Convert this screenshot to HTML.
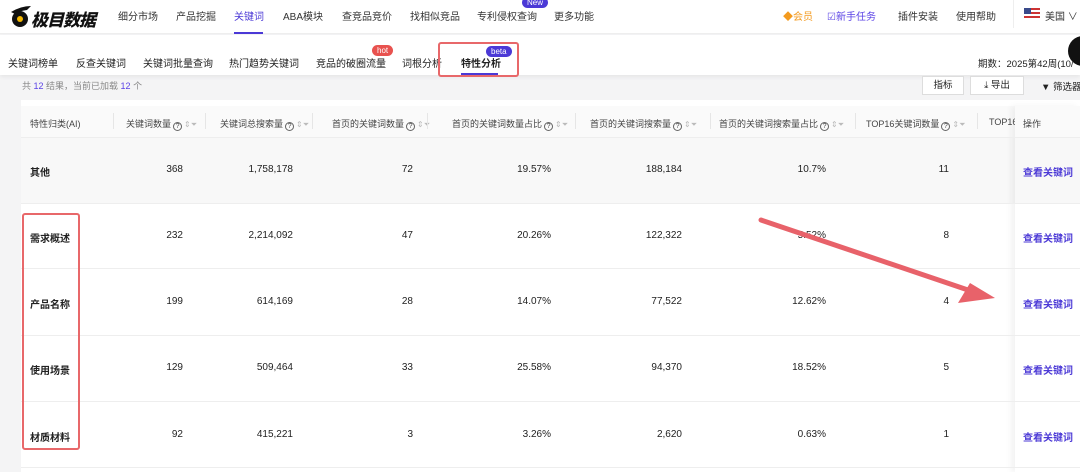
<!DOCTYPE html><html><head><meta charset="utf-8"><style>
*{margin:0;padding:0;box-sizing:border-box}
body{width:1080px;height:472px;overflow:hidden;background:#f4f4f5;font-family:"Liberation Sans","Noto Sans CJK SC",sans-serif;color:#222;position:relative}
.a{position:absolute;white-space:nowrap}
.top{position:absolute;left:0;top:0;width:1080px;height:34px;background:#fff;border-bottom:1px solid #eee}
.sub{position:absolute;left:0;top:35px;width:1080px;height:40px;background:#fff;box-shadow:0 2px 4px rgba(0,0,0,.06)}
.n{font-size:10px;color:#333;top:8px}
.s{font-size:10px;color:#222;top:55px}
.tbl{position:absolute;left:21px;top:100px;width:1059px;height:372px;background:#fff}
.h{font-size:9px;color:#444;top:117px}
.v{font-size:10px;color:#222;text-align:right;width:100px}
.l{font-size:10px;font-weight:bold;color:#222}
.q{display:inline-block;width:9px;height:9px;border:1px solid #666;border-radius:50%;font-size:7px;line-height:7px;text-align:center;vertical-align:-1px;margin-left:2px}
.so{color:#bbb;font-size:8px;margin-left:2px}
.sep{position:absolute;top:113px;width:1px;height:16px;background:#e6e6e6}
.row{position:absolute;left:21px;width:1059px;height:1px;background:#eee}
.lk{font-size:10px;color:#4b39d6;font-weight:bold;left:1023px}
.badge{position:absolute;color:#fff;font-size:8px;border-radius:7px;padding:0 5px;height:11px;line-height:11px}
</style></head><body>
<div class="top"></div>
<svg class="a" style="left:7px;top:4px" width="28" height="24"><path d="M4 8 Q14 2 24 2 L20 6 Q12 7 8 10 Z" fill="#111"/><circle cx="13" cy="15" r="8" fill="#111"/><circle cx="13" cy="15" r="3" fill="#f5b800"/></svg>
<div class="a" style="left:31px;top:6px;font-size:17px;font-weight:900;font-style:italic;color:#111;letter-spacing:-1px">极目数据</div>
<div class="a n" style="left:118px">细分市场</div>
<div class="a n" style="left:176px">产品挖掘</div>
<div class="a n" style="left:234px;color:#4b39d6">关键词</div>
<div class="a" style="left:234px;top:32px;width:29px;height:2px;background:#4b39d6"></div>
<div class="a n" style="left:283px">ABA模块</div>
<div class="a n" style="left:342px">查竞品竞价</div>
<div class="a n" style="left:410px">找相似竞品</div>
<div class="a n" style="left:477px">专利侵权查询</div>
<div class="badge" style="left:522px;top:-3px;background:#4b39d6">New</div>
<div class="a n" style="left:554px">更多功能</div>
<div class="a n" style="left:783px;color:#f39a1e">◆会员</div>
<div class="a n" style="left:827px;color:#5b43e6">☑新手任务</div>
<div class="a n" style="left:898px">插件安装</div>
<div class="a n" style="left:956px">使用帮助</div>
<div class="a" style="left:1013px;top:0;width:1px;height:28px;background:#eee"></div>
<div class="a" style="left:1024px;top:8px;width:16px;height:12px;background:repeating-linear-gradient(#c33 0 2px,#fff 2px 4px)"><div style="width:7px;height:6px;background:#3a4a8a"></div></div>
<div class="a n" style="left:1045px">美国 ∨</div>
<div class="sub"></div>
<div class="a s" style="left:8px">关键词榜单</div>
<div class="a s" style="left:76px">反查关键词</div>
<div class="a s" style="left:143px">关键词批量查询</div>
<div class="a s" style="left:229px">热门趋势关键词</div>
<div class="a s" style="left:316px">竞品的破圈流量</div>
<div class="badge" style="left:372px;top:45px;background:#e8524f">hot</div>
<div class="a s" style="left:402px">词根分析</div>
<div class="a s" style="left:461px;font-weight:bold">特性分析</div>
<div class="badge" style="left:486px;top:46px;background:#4b39d6">beta</div>
<div class="a" style="left:461px;top:73px;width:37px;height:2px;background:#4b39d6"></div>
<div class="a" style="left:438px;top:42px;width:81px;height:35px;border:2px solid #e8686a;border-radius:3px"></div>
<div class="a s" style="left:978px;top:56px;font-size:9.5px">期数：2025第42周(10/</div>
<div class="a" style="left:1068px;top:36px;width:30px;height:30px;border-radius:50%;background:#111"></div>
<div class="tbl"></div>
<div class="a" style="left:22px;top:79px;font-size:9px;color:#888">共 <span style="color:#5b43e6">12</span> 结果，当前已加载 <span style="color:#5b43e6">12</span> 个</div>
<div class="a" style="left:922px;top:76px;width:42px;height:19px;border:1px solid #ddd;font-size:9.5px;text-align:center;line-height:17px;background:#fff">指标</div>
<div class="a" style="left:970px;top:76px;width:54px;height:19px;border:1px solid #ddd;font-size:9.5px;text-align:center;line-height:17px;background:#fff">⤓ 导出</div>
<div class="a" style="left:1041px;top:79px;font-size:9.5px">▼ 筛选器</div>
<div class="a" style="left:21px;top:106px;width:1059px;height:31px;background:#fafafa"></div>
<div class="a" style="left:21px;top:137px;width:1059px;height:66px;background:#f8f8f8"></div>
<div class="a" style="left:1015px;top:106px;width:65px;height:366px;box-shadow:-4px 0 6px rgba(0,0,0,.05)"></div>
<div class="a h" style="left:30px">特性归类(AI)</div>
<div class="sep" style="left:113px"></div><div class="a h" style="left:126px">关键词数量<span class="q">?</span><span class="so">⇕⏷</span></div>
<div class="sep" style="left:205px"></div><div class="a h" style="left:220px">关键词总搜索量<span class="q">?</span><span class="so">⇕⏷</span></div>
<div class="sep" style="left:312px"></div><div class="a h" style="left:332px">首页的关键词数量<span class="q">?</span><span class="so">⇕⏷</span></div>
<div class="sep" style="left:427px"></div><div class="a h" style="left:452px">首页的关键词数量占比<span class="q">?</span><span class="so">⇕⏷</span></div>
<div class="sep" style="left:575px"></div><div class="a h" style="left:590px">首页的关键词搜索量<span class="q">?</span><span class="so">⇕⏷</span></div>
<div class="sep" style="left:710px"></div><div class="a h" style="left:719px">首页的关键词搜索量占比<span class="q">?</span><span class="so">⇕⏷</span></div>
<div class="sep" style="left:855px"></div><div class="a h" style="left:866px">TOP16关键词数量<span class="q">?</span><span class="so">⇕⏷</span></div>
<div class="sep" style="left:977px"></div><div class="a h" style="left:989px">TOP16</div>
<div class="a h" style="left:1015px;padding-left:8px;background:#fafafa;width:65px">操作</div>
<div class="row" style="top:137px"></div><div class="row" style="top:203px"></div><div class="row" style="top:268px"></div><div class="row" style="top:335px"></div><div class="row" style="top:401px"></div><div class="row" style="top:467px"></div>

<div class="a l" style="left:30px;top:164px">其他</div><div class="a v" style="left:83px;top:164px">368</div><div class="a v" style="left:193px;top:164px">1,758,178</div><div class="a v" style="left:313px;top:164px">72</div><div class="a v" style="left:451px;top:164px">19.57%</div><div class="a v" style="left:582px;top:164px">188,184</div><div class="a v" style="left:726px;top:164px">10.7%</div><div class="a v" style="left:849px;top:164px">11</div><div class="a lk" style="top:164px">查看关键词</div>
<div class="a l" style="left:30px;top:230px">需求概述</div><div class="a v" style="left:83px;top:230px">232</div><div class="a v" style="left:193px;top:230px">2,214,092</div><div class="a v" style="left:313px;top:230px">47</div><div class="a v" style="left:451px;top:230px">20.26%</div><div class="a v" style="left:582px;top:230px">122,322</div><div class="a v" style="left:726px;top:230px">5.52%</div><div class="a v" style="left:849px;top:230px">8</div><div class="a lk" style="top:230px">查看关键词</div>
<div class="a l" style="left:30px;top:296px">产品名称</div><div class="a v" style="left:83px;top:296px">199</div><div class="a v" style="left:193px;top:296px">614,169</div><div class="a v" style="left:313px;top:296px">28</div><div class="a v" style="left:451px;top:296px">14.07%</div><div class="a v" style="left:582px;top:296px">77,522</div><div class="a v" style="left:726px;top:296px">12.62%</div><div class="a v" style="left:849px;top:296px">4</div><div class="a lk" style="top:296px">查看关键词</div>
<div class="a l" style="left:30px;top:362px">使用场景</div><div class="a v" style="left:83px;top:362px">129</div><div class="a v" style="left:193px;top:362px">509,464</div><div class="a v" style="left:313px;top:362px">33</div><div class="a v" style="left:451px;top:362px">25.58%</div><div class="a v" style="left:582px;top:362px">94,370</div><div class="a v" style="left:726px;top:362px">18.52%</div><div class="a v" style="left:849px;top:362px">5</div><div class="a lk" style="top:362px">查看关键词</div>
<div class="a l" style="left:30px;top:429px">材质材料</div><div class="a v" style="left:83px;top:429px">92</div><div class="a v" style="left:193px;top:429px">415,221</div><div class="a v" style="left:313px;top:429px">3</div><div class="a v" style="left:451px;top:429px">3.26%</div><div class="a v" style="left:582px;top:429px">2,620</div><div class="a v" style="left:726px;top:429px">0.63%</div><div class="a v" style="left:849px;top:429px">1</div><div class="a lk" style="top:429px">查看关键词</div>

<div class="a" style="left:22px;top:213px;width:58px;height:237px;border:2px solid #e8686a;border-radius:3px"></div>
<svg class="a" style="left:0;top:0" width="1080" height="472"><path d="M761 220 L968 290" stroke="#e8626a" stroke-width="5" stroke-linecap="round"/><polygon points="995,298 958,303 970,283" fill="#e8626a"/></svg>
</body></html>
